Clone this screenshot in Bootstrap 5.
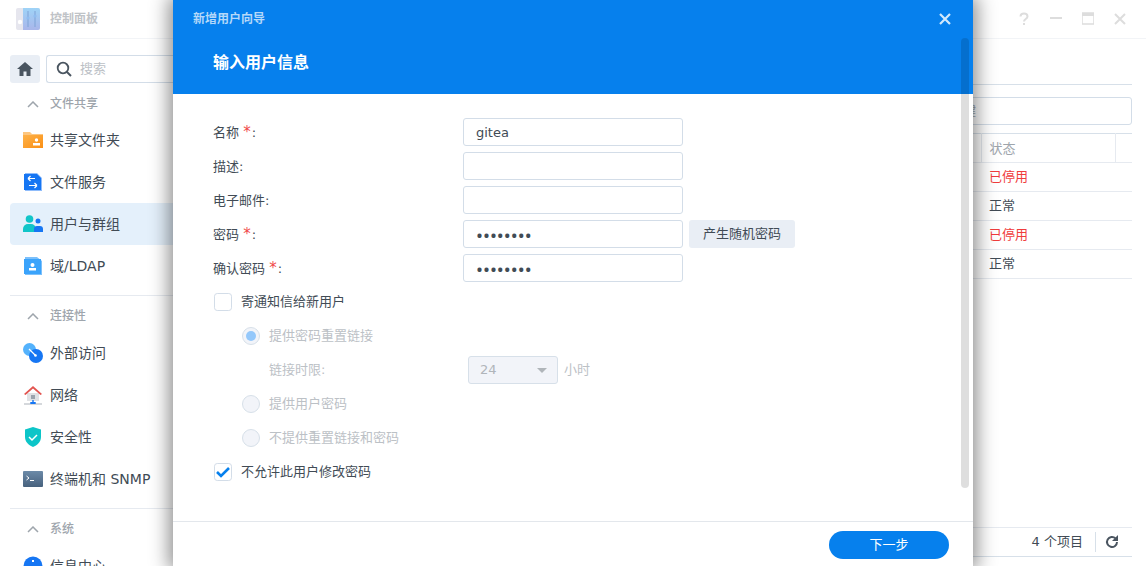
<!DOCTYPE html>
<html lang="zh">
<head>
<meta charset="utf-8">
<title>控制面板</title>
<link href="https://cdn.jsdelivr.net/npm/bootstrap@5.3.0/dist/css/bootstrap.min.css" rel="stylesheet">
<style>
html,body{height:566px;overflow:hidden;background:#fff}
body{font-family:"DejaVu Sans","Noto Sans CJK SC",sans-serif;font-size:13px;color:#414b55;position:relative}
.win-head{height:39px;border-bottom:1px solid #f2f4f7;padding:0 0 0 16px}
.win-title{font-size:12px;font-weight:700;color:#bfc3c7;margin-left:10px}
.win-tools{margin-left:auto;padding-right:20px;gap:20px}
.win-body{height:527px}
.side{width:173px;flex:none;padding:16px 0 0 10px;overflow:hidden}
.home-btn{width:30px;height:28px;background:#e9eef5;border-radius:3px}
.search-box{height:28px;margin-left:6px;flex:1;border:1px solid #d3dde8;border-right:0;border-radius:3px 0 0 3px;padding-left:9px;color:#bcc1c6}
.group-t{height:28px;padding:2px 0 0 17px;font-size:12px;font-weight:500;color:#9ea5ac;gap:11px;margin-bottom:3px}
.group-t.first-g{margin-bottom:2px}
.side-item{height:42px;padding-left:13px;font-size:14px;gap:7px;border-radius:4px 0 0 4px;color:#414b55}
.side-item svg{width:20px;height:20px;flex:none}
.side-item.on{background:#e4f0fb}
.side-sep{height:1px;background:#e6eaf0;margin:8px 0 5px}
.main-pane{flex:1;padding:45px 14px 0 10px;min-width:0}
.top-rule{border-top:1px solid #d7e0e9}
.filter-box{height:28px;margin:12px 0 8px;border:1px solid #d3dde8;border-radius:3px;padding-right:155px;color:#9ea5ac}
.user-tbl{table-layout:fixed;width:100%;margin:0;border-top:1px solid #d7e0e9;color:#414b55;font-size:13px}
.user-tbl th,.user-tbl td{height:29px;padding:0 0 0 8px;border-bottom:1px solid #e6eaf0;vertical-align:middle;font-weight:400;box-shadow:none}
.user-tbl th{height:29px;color:#9ea5ac;padding-top:1px}
.user-tbl th.cell-line{border-left:1px solid #e6eaf0}
.st-off{color:#f03c3c !important}
.foot-bar{position:absolute;left:183px;right:14px;top:527px;height:30px;border-top:1px solid #e6eaf0;border-bottom:1px solid #d7e0e9;padding-right:13px}
.foot-sep{width:1px;height:20px;background:#d7e0e9;margin:0 9px 0 12px}

.wizard{position:absolute;left:173px;top:0;width:800px;height:566px;background:#fff;box-shadow:0 0 18px 4px rgba(0,0,0,.45)}
.wiz-head{height:94px;background:#0680ed;color:#fff;padding:0 22px 0 20px}
.wiz-top{height:38px}
.wiz-sub{font-size:12px;font-weight:700;color:#b4d8f9}
.wiz-h{font-size:16px;font-weight:700;margin:13px 0 0 20px;line-height:24px}
.wiz-scroll{position:absolute;left:788px;top:38px;width:8px;height:450px;border-radius:4px;background:rgba(0,0,0,.13)}
.wiz-body{padding:24px 0 0 40px;height:427px}
.f-row{height:28px;margin-bottom:6px}
.f-label{width:250px;flex:none;margin-top:2px}
.req{color:#f04848;font-size:15px;line-height:1;margin-right:1px}
.f-input{width:220px;height:28px;padding:0 12px;font-size:13px;color:#414b55;border:1px solid #d3dde8;border-radius:3px;font-family:inherit;box-shadow:none}
.f-input[type=password]{font-family:"Noto Sans",sans-serif;font-size:18.5px}
.gen-btn{height:28px;width:106px;margin-left:6px;padding:0;background:#e9eef5;border:0;border-radius:3px;font-size:13px;color:#414b55}
.chk{width:18px;height:18px;margin:0 9px 0 1px;flex:none;border:1px solid #d3dde8;border-radius:3px;background-color:#fff}
.form-check-input.chk:checked{background-color:#fff;border-color:#d3dde8;background-size:14px;background-image:url("data:image/svg+xml,%3csvg xmlns='http://www.w3.org/2000/svg' viewBox='0 0 14 14'%3e%3cpath d='M1 7l4 4 8-8' fill='none' stroke='%230680ed' stroke-width='2.6'/%3e%3c/svg%3e")}
.rad{width:18px;height:18px;margin:0 9px 0 29px;flex:none;border:1px solid #d7e0e9;background-color:#f2f4f9;opacity:1}
.form-check-input.rad:disabled{opacity:1}
.form-check-input.rad:checked{background-color:#f2f4f9;border-color:#d7e0e9;background-size:10px;background-position:center;background-image:url("data:image/svg+xml,%3csvg xmlns='http://www.w3.org/2000/svg' viewBox='0 0 10 10'%3e%3ccircle cx='5' cy='5' r='5' fill='%2394c8fb'/%3e%3c/svg%3e")}
.dim{color:#bcc1c6}
.sel-24{width:90px;height:28px;margin-left:0;padding:0 0 0 11px;font-size:13px;font-family:inherit;border:1px solid #d7e0e9;border-radius:3px;box-shadow:none;color:#b0b5ba;background-color:#f2f4f9;background-size:10px 5px;background-position:right 10px center;background-image:url("data:image/svg+xml,%3csvg xmlns='http://www.w3.org/2000/svg' viewBox='0 0 10 5'%3e%3cpath d='M0 0h10L5 5z' fill='%23b0b5ba'/%3e%3c/svg%3e")}
.form-select.sel-24:disabled{background-color:#f2f4f9;color:#b0b5ba}
.sel-lab{width:255px;flex:none;padding-left:56px}
.unit-lab{margin-left:6px}
.wiz-foot{height:45px;border-top:1px solid #e3e7ec;padding:9px 24px 0 0}
.next-btn{width:120px;height:28px;padding:0;background:#0680ed;border:0;border-radius:14px;color:#fff;font-size:13px}
.next-btn:hover{background:#0680ed;color:#fff}
.home-row{margin-bottom:6px}
</style>
</head>
<body>
<div class="win-head d-flex align-items-center">
  <svg width="24" height="24" viewBox="0 0 24 24"><defs><linearGradient id="lg" x1="0" y1="0" x2="0" y2="1"><stop offset="0" stop-color="#9ed3f7"/><stop offset="1" stop-color="#a9b6ea"/></linearGradient></defs><rect x="0" y="1" width="24" height="22" rx="2" fill="#e6e6ee"/><path d="M7 1h15a2 2 0 0 1 2 2v18a2 2 0 0 1-2 2H7z" fill="url(#lg)"/><path d="M12 4v16M19 4v16" stroke="#7fa3d6" stroke-width="1"/><circle cx="19" cy="9" r="1.600" fill="#8fbdf0"/><circle cx="12" cy="11" r="1.600" fill="#8fbdf0"/><circle cx="4" cy="15" r="2.200" fill="#fff"/></svg>
  <span class="win-title">控制面板</span>
  <div class="win-tools d-flex align-items-center">
    <svg width="12" height="14" viewBox="0 0 12 14"><path d="M2.500 4.500C2.500 2.500 4 1.500 6 1.500s3.500 1.200 3.500 3c0 2.500-3.500 2.500-3.500 5" fill="none" stroke="#ddd" stroke-width="2"/><rect x="5" y="11" width="2" height="2" fill="#ddd"/></svg>
    <svg width="12" height="14" viewBox="0 0 12 14"><rect y="5" width="12" height="2" fill="#ddd"/></svg>
    <svg width="12" height="14" viewBox="0 0 12 14"><path d="M0 1h12v11H0z" fill="none" stroke="#ddd" stroke-width="1.500"/><rect y="1" width="12" height="3" fill="#ddd"/></svg>
    <svg width="12" height="14" viewBox="0 0 12 14"><path d="M1 2l10 10M11 2L1 12" stroke="#ddd" stroke-width="2"/></svg>
  </div>
</div>
<div class="win-body d-flex">
  <aside class="side">
    <div class="d-flex home-row">
      <div class="home-btn d-flex align-items-center justify-content-center"><svg width="16" height="14" viewBox="0 0 16 14"><path d="M8 0L0 7h2.500v7h4V9.500h3V14h4V7H16z" fill="#4a5560"/></svg></div>
      <div class="search-box d-flex align-items-center"><svg width="16" height="16" viewBox="0 0 16 16" class="me-2"><circle cx="7" cy="7" r="5.300" fill="none" stroke="#4a5560" stroke-width="1.800"/><path d="M11 11l4 4" stroke="#4a5560" stroke-width="2"/></svg>搜索</div>
    </div>
    <div class="group-t first-g d-flex align-items-center"><svg width="12" height="7" viewBox="0 0 12 7"><path d="M1 6l5-5 5 5" fill="none" stroke="#9ea5ac" stroke-width="1.500"/></svg>文件共享</div>
    <div class="side-item d-flex align-items-center"><svg viewBox="0 0 20 20"><defs><linearGradient id="fg" x1="0" y1="0" x2="1" y2="1"><stop offset="0" stop-color="#fdb24a"/><stop offset="1" stop-color="#fb8f14"/></linearGradient></defs><path d="M0 2h7l2 2h11v14H0z" fill="#fdc67f"/><path d="M0 5h20v13H0z" fill="url(#fg)"/><circle cx="13.500" cy="10" r="1.700" fill="#fff"/><rect x="10" y="13" width="7" height="2.500" fill="#fff"/></svg>共享文件夹</div>
    <div class="side-item d-flex align-items-center"><svg viewBox="0 0 20 20"><path d="M2 1h12l5 5v13H2z" fill="#8fbcfb"/><path d="M1 2h13l4 4v12H1z" fill="#1676f3"/><path d="M12 6.500H5M5 6.500l2.500-2.500M5 6.500l2.500 2.500M6 13.500h8M14 13.500l-2.500-2.500M14 13.500l-2.500 2.500" fill="none" stroke="#fff" stroke-width="1.200"/></svg>文件服务</div>
    <div class="side-item on d-flex align-items-center"><svg viewBox="0 0 20 20"><circle cx="6.500" cy="5" r="3.800" fill="#11c5c8"/><path d="M0 18v-3a5 5 0 0 1 5-5h3a5 5 0 0 1 5 5v3z" fill="#11c5c8"/><circle cx="15" cy="7" r="2.500" fill="#1676f3"/><path d="M11 18v-3a3 3 0 0 1 3-3h3a3 3 0 0 1 3 3v3z" fill="#1676f3"/></svg>用户与群组</div>
    <div class="side-item d-flex align-items-center"><svg viewBox="0 0 20 20"><path d="M2 1h12l5 4v14H2z" fill="#7cc0fb"/><path d="M1 3h17v15H1z" fill="#3aa3fb"/><circle cx="9.500" cy="9" r="2" fill="#fff"/><rect x="6" y="12" width="7" height="2.500" fill="#fff"/></svg>域/LDAP</div>
    <div class="side-sep"></div>
    <div class="group-t d-flex align-items-center"><svg width="12" height="7" viewBox="0 0 12 7"><path d="M1 6l5-5 5 5" fill="none" stroke="#9ea5ac" stroke-width="1.500"/></svg>连接性</div>
    <div class="side-item d-flex align-items-center"><svg viewBox="0 0 20 20"><circle cx="6.500" cy="6.500" r="6.500" fill="#54b2fc"/><circle cx="13" cy="13" r="7" fill="#1676f3"/><path d="M6 6l6.500 6.500" stroke="#fff" stroke-width="1.300"/><circle cx="12.500" cy="12.500" r="1.300" fill="#fff"/></svg>外部访问</div>
    <div class="side-item d-flex align-items-center"><svg viewBox="0 0 20 20"><path d="M4 8h12v8H4z" fill="#dfe1e4"/><path d="M1 9l9-8 9 8-1.500 1L10 3.500 2.500 10z" fill="#e2534f"/><rect x="8" y="10" width="4" height="4" fill="#9aa3ad"/><rect x="1" y="18" width="18" height="2" fill="#d5d8dc"/><path d="M9.300 15h1.400v2h2v2h-5.400v-2h2z" fill="#1676f3"/></svg>网络</div>
    <div class="side-item d-flex align-items-center"><svg viewBox="0 0 20 20"><path d="M10 0l8 2.500V10c0 5-4 8.500-8 10-4-1.500-8-5-8-10V2.500z" fill="#0cc5c8"/><path d="M6 10l3 3 5-5" fill="none" stroke="#fff" stroke-width="1.500"/></svg>安全性</div>
    <div class="side-item d-flex align-items-center"><svg viewBox="0 0 20 20"><defs><linearGradient id="tg" x1="0" y1="0" x2="0" y2="1"><stop offset="0" stop-color="#6c8aa8"/><stop offset="1" stop-color="#47617d"/></linearGradient></defs><rect y="2" width="20" height="16" rx="1" fill="url(#tg)"/><path d="M3.500 7l2.500 2-2.500 2" fill="none" stroke="#fff"/><path d="M7 11.500h4" stroke="#fff"/></svg>终端机和 SNMP</div>
    <div class="side-sep"></div>
    <div class="group-t d-flex align-items-center"><svg width="12" height="7" viewBox="0 0 12 7"><path d="M1 6l5-5 5 5" fill="none" stroke="#9ea5ac" stroke-width="1.500"/></svg>系统</div>
    <div class="side-item d-flex align-items-center"><svg viewBox="0 0 20 20"><circle cx="10" cy="10" r="9.500" fill="#1676f3"/><rect x="9" y="4" width="2" height="2" fill="#fff"/></svg>信息中心</div>
  </aside>
  <main class="main-pane">
    <div class="top-rule"></div>
    <div class="filter-box d-flex align-items-center justify-content-end">键</div>
    <table class="table user-tbl">
      <colgroup><col style="width:798px"><col style="width:134px"><col></colgroup>
      <thead><tr><th></th><th class="cell-line">状态</th><th class="cell-line"></th></tr></thead>
      <tbody>
        <tr><td></td><td class="st-off">已停用</td><td></td></tr>
        <tr><td></td><td>正常</td><td></td></tr>
        <tr><td></td><td class="st-off">已停用</td><td></td></tr>
        <tr><td></td><td>正常</td><td></td></tr>
      </tbody>
    </table>
  </main>
</div>
<div class="foot-bar d-flex align-items-center justify-content-end">
  <span>4 个项目</span><span class="foot-sep"></span>
  <svg width="14" height="14" viewBox="0 0 14 14"><path d="M12 7a5 5 0 1 1-1.500-3.600" fill="none" stroke="#4a5560" stroke-width="2"/><path d="M13 0v6H7z" fill="#4a5560"/></svg>
</div>

<section class="wizard d-flex flex-column">
  <header class="wiz-head">
    <div class="wiz-top d-flex align-items-center justify-content-between">
      <span class="wiz-sub">新增用户向导</span>
      <svg width="12" height="12" viewBox="0 0 12 12"><path d="M1 1l10 10M11 1L1 11" stroke="#d2e8fc" stroke-width="2.200"/></svg>
    </div>
    <div class="wiz-h">输入用户信息</div>
  </header>
  <div class="wiz-scroll"></div>
  <form class="wiz-body">
    <div class="f-row d-flex align-items-center"><label class="f-label">名称 <span class="req">*</span>:</label><input class="form-control f-input" type="text" value="gitea"></div>
    <div class="f-row d-flex align-items-center"><label class="f-label">描述:</label><input class="form-control f-input" type="text"></div>
    <div class="f-row d-flex align-items-center"><label class="f-label">电子邮件:</label><input class="form-control f-input" type="text"></div>
    <div class="f-row d-flex align-items-center"><label class="f-label">密码 <span class="req">*</span>:</label><input class="form-control f-input" type="password" value="12345678"><button type="button" class="btn gen-btn">产生随机密码</button></div>
    <div class="f-row d-flex align-items-center"><label class="f-label">确认密码 <span class="req">*</span>:</label><input class="form-control f-input" type="password" value="12345678"></div>
    <div class="f-row d-flex align-items-center"><input class="form-check-input chk mt-0" type="checkbox"><label>寄通知信给新用户</label></div>
    <div class="f-row d-flex align-items-center"><input class="form-check-input rad mt-0" type="radio" name="pw" checked disabled><label class="dim">提供密码重置链接</label></div>
    <div class="f-row d-flex align-items-center"><label class="dim sel-lab">链接时限:</label><select class="form-select sel-24" disabled><option>24</option></select><span class="dim unit-lab">小时</span></div>
    <div class="f-row d-flex align-items-center"><input class="form-check-input rad mt-0" type="radio" name="pw" disabled><label class="dim">提供用户密码</label></div>
    <div class="f-row d-flex align-items-center"><input class="form-check-input rad mt-0" type="radio" name="pw" disabled><label class="dim">不提供重置链接和密码</label></div>
    <div class="f-row d-flex align-items-center"><input class="form-check-input chk mt-0" type="checkbox" checked><label>不允许此用户修改密码</label></div>
  </form>
  <footer class="wiz-foot d-flex justify-content-end">
    <button type="button" class="btn next-btn">下一步</button>
  </footer>
</section>
</body>
</html>
